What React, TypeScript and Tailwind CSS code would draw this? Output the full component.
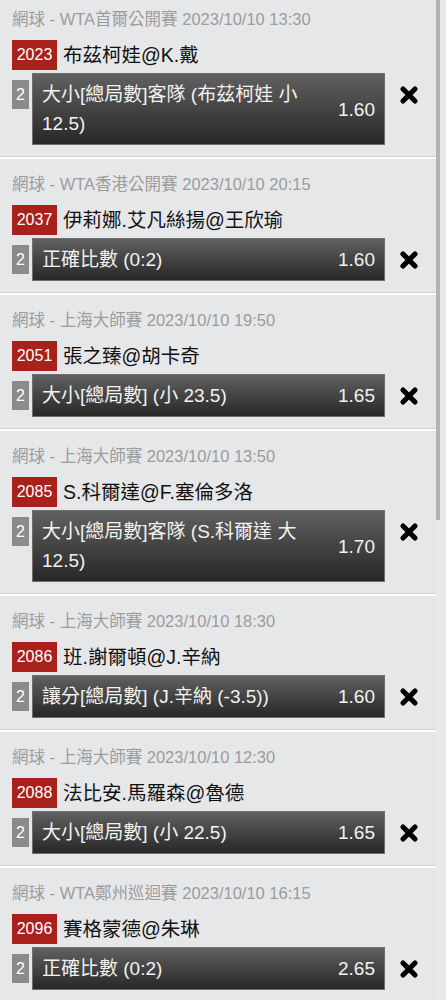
type Bet = {
  league: string;
  time: string;
  code: string;
  teams: string;
  pick: string;
  odds: string;
};

const bets: Bet[] = [
  { league: "網球 - WTA首爾公開賽", time: "2023/10/10 13:30", code: "2023", teams: "布茲柯娃@K.戴", pick: "大小[總局數]客隊 (布茲柯娃 小 12.5)", odds: "1.60" },
  { league: "網球 - WTA香港公開賽", time: "2023/10/10 20:15", code: "2037", teams: "伊莉娜.艾凡絲揚@王欣瑜", pick: "正確比數 (0:2)", odds: "1.60" },
  { league: "網球 - 上海大師賽", time: "2023/10/10 19:50", code: "2051", teams: "張之臻@胡卡奇", pick: "大小[總局數] (小 23.5)", odds: "1.65" },
  { league: "網球 - 上海大師賽", time: "2023/10/10 13:50", code: "2085", teams: "S.科爾達@F.塞倫多洛", pick: "大小[總局數]客隊 (S.科爾達 大 12.5)", odds: "1.70" },
  { league: "網球 - 上海大師賽", time: "2023/10/10 18:30", code: "2086", teams: "班.謝爾頓@J.辛納", pick: "讓分[總局數] (J.辛納 (-3.5))", odds: "1.60" },
  { league: "網球 - 上海大師賽", time: "2023/10/10 12:30", code: "2088", teams: "法比安.馬羅森@魯德", pick: "大小[總局數] (小 22.5)", odds: "1.65" },
  { league: "網球 - WTA鄭州巡迴賽", time: "2023/10/10 16:15", code: "2096", teams: "賽格蒙德@朱琳", pick: "正確比數 (0:2)", odds: "2.65" },
];

function RemoveIcon() {
  return (
    <svg width="20" height="20" viewBox="0 0 20 20">
      <path d="M4 4 L16 16 M16 4 L4 16" stroke="#000" strokeWidth="5.2" strokeLinecap="round" />
    </svg>
  );
}

function BetCard({ bet, first }: { bet: Bet; first?: boolean }) {
  return (
    <div>
      <div className={`${first ? "pt-[9px]" : "pt-[15px]"} pb-[11px] pl-[12px]`}>
        <div className="text-[16.5px] leading-[20px] text-[#9c9c9c] whitespace-nowrap">
          {bet.league} {bet.time}
        </div>
        <div className="mt-[11px] flex items-center gap-[6px]">
          <span className="h-[30px] w-[45px] bg-[#a8211b] text-center text-[16px] leading-[30px] text-white">
            {bet.code}
          </span>
          <span className="text-[19.5px] leading-[30px] text-[#111]">{bet.teams}</span>
        </div>
        <div className="mt-[3px] flex items-start">
          <span className="mt-[7px] h-[29px] w-[17px] bg-[#8b8b8b] text-center text-[16px] leading-[29px] text-white">
            2
          </span>
          <div className="ml-[3px] flex w-[353px] items-center gap-[16px] border border-[#6e6e6e] bg-gradient-to-b from-[#616161] to-[#282828] py-[6px] pl-[9px] pr-[9px] text-[19px] leading-[29px] text-[#f2f2f2]">
            <div className="flex-1">{bet.pick}</div>
            <div>{bet.odds}</div>
          </div>
          <div className="ml-[14px] mt-[12px] flex h-[20px] w-[20px] items-center justify-center">
            <RemoveIcon />
          </div>
        </div>
      </div>
      <div className="h-px bg-[#d1d2d4]" />
      <div className="h-[2px] bg-white" />
    </div>
  );
}

export default function App() {
  return (
    <div
      className="flex h-[1000px] w-[446px] overflow-hidden bg-[#e6e7e9]"
      style={{ fontFamily: '"Liberation Sans", "Noto Sans CJK TC", sans-serif' }}
    >
      <div className="w-[436px] shrink-0">
        {bets.map((b, i) => (
          <BetCard key={b.code} bet={b} first={i === 0} />
        ))}
      </div>
      <div className="w-[10px] shrink-0 bg-[#e8e9ea]">
        <div className="h-[520px] w-[4px] bg-[#b3b3b3]" />
      </div>
    </div>
  );
}
